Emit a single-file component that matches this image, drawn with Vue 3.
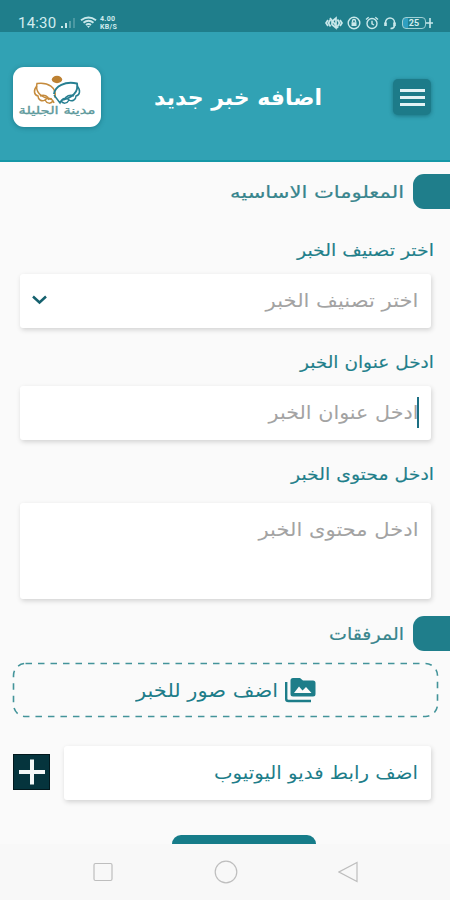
<template>
  <div class="screen" dir="rtl">
    <div class="status-bar" dir="ltr">
      <div class="status-left">
        <span class="clock">14:30</span>
        <svg class="signal" width="15" height="12" viewBox="0 0 15 12">
          <rect x="0" y="9" width="2" height="2" fill="#c9e8ea" />
          <rect x="4" y="6" width="2" height="5" fill="#c9e8ea" />
          <rect x="8" y="4" width="2" height="7" fill="#5aa3ab" />
          <rect x="12" y="1" width="2" height="10" fill="#4a98a2" />
        </svg>
        <svg class="wifi" width="17" height="13" viewBox="0 0 17 13" fill="none" stroke="#c9e8ea" stroke-width="2">
          <path d="M1 4.2Q8.500 -1.200 16 4.200"></path>
          <path d="M3.500 6.700Q8.500 2.800 13.500 6.700"></path>
          <path d="M6 9Q8.500 7 11 9"></path>
          <path d="M7 10H10L8.500 12Z" fill="#c9e8ea" stroke="none"></path>
        </svg>
        <span class="speed"><b>4.00</b><b>KB/S</b></span>
      </div>
      <div class="status-right">
        <svg width="18" height="14" viewBox="0 0 18 14" fill="none" stroke="#c9e8ea" stroke-width="1.700">
          <path d="M3 4L1 7L3 10M15 4L17 7L15 10M5.500 3.500L3.500 7L5.500 10.500M12.500 3.500L14.500 7L12.500 10.500"></path>
          <path d="M7 5.500L11 2V12L7 8.500ZM5 2L13 12"></path>
        </svg>
        <svg width="14" height="14" viewBox="0 0 14 14" fill="none" stroke="#c9e8ea" stroke-width="1.400">
          <circle cx="7" cy="7" r="5.800"></circle>
          <rect x="4.500" y="6.300" width="5" height="3.700" fill="#c9e8ea" stroke="none"></rect>
          <path d="M5.500 6.500V5a1.500 1.500 0 0 1 3 0v1.500"></path>
        </svg>
        <svg width="14" height="14" viewBox="0 0 14 14" fill="none" stroke="#c9e8ea" stroke-width="1.400">
          <circle cx="7" cy="7.500" r="5"></circle>
          <path d="M1 3.500L3.700 1.200M13 3.500L10.300 1.200M7 4.700V7.800L9 9"></path>
        </svg>
        <svg width="14" height="14" viewBox="0 0 14 14" fill="none" stroke="#c9e8ea" stroke-width="1.500">
          <path d="M2.500 8V6.500a4.500 4.500 0 0 1 9 0V8"></path>
          <path d="M2.500 6.500V10M11.500 6.500V10" stroke-width="2.600"></path>
          <path d="M11.500 10Q11 12.500 7.500 12.500"></path>
        </svg>
        <div class="battery-wrap">
          <span class="battery">25</span>
          <svg width="7" height="12" viewBox="0 0 7 12" fill="none" stroke="#c9e8ea" stroke-width="1.600">
            <path d="M4 1V11M0 6H7"></path>
          </svg>
        </div>
      </div>
    </div>

    <header class="app-header">
      <button class="menu-btn" aria-label="menu">
        <span></span>
        <span></span>
        <span></span>
      </button>
      <svg class="title" width="170" height="40" viewBox="0 0 170 40">
        <text x="85" y="27" textLength="168" lengthAdjust="spacingAndGlyphs">اضافه خبر جديد</text>
      </svg>
      <div class="logo">
        <svg width="88" height="60" viewBox="0 0 88 60" fill="none">
          <ellipse cx="44" cy="12.500" rx="5.200" ry="3.700" fill="#bd8132" />
          <g stroke="#c58b3d" stroke-width="1.500">
            <path d="M42 31C44 20 35 15 24 16.500C22 24 27 31 39 32"></path>
            <path d="M24 19C20 23 21 28 25 29C25 33 29 35 32 33C34 37 38 37 40 34"></path>
            <path d="M27 29C31 27 35 29 36 33M32 33C35 30 39 31 41 36"></path>
          </g>
          <g stroke="#277f91" stroke-width="1.500">
            <path d="M41 27C42 19 52 14 64 16.500C66 25 59 31 49 33" stroke-width="1.900"></path>
            <path d="M64 19C68 23 67 28 63 29C63 33 59 35 56 33C54 37 50 37 48 34"></path>
            <path d="M61 29C57 27 53 29 51 33M56 33C53 30 49 31 47 36L41 28"></path>
          </g>
          <text class="logo-text" x="44" y="46.500" textLength="77" lengthAdjust="spacingAndGlyphs">مدينة الجليلة</text>
        </svg>
      </div>
    </header>

    <main class="content">
      <div class="section-head">
        <span class="tab"></span>
        <svg class="section-title" width="176" height="34" viewBox="0 0 176 34">
          <text x="175" y="23" textLength="174" lengthAdjust="spacingAndGlyphs">المعلومات الاساسيه</text>
        </svg>
      </div>

      <div v-for="field in fields" :key="field.id" class="field">
        <svg class="label" width="200" height="30" viewBox="0 0 200 30">
          <text x="200" y="20" :textLength="field.labelWidth" lengthAdjust="spacingAndGlyphs">{{ field.text }}</text>
        </svg>
        <div class="box" :class="field.id">
          <svg class="placeholder" width="200" height="34" viewBox="0 0 200 34">
            <text x="199.500" y="23" :textLength="field.width" lengthAdjust="spacingAndGlyphs">{{ field.text }}</text>
          </svg>
          <span v-if="field.id === 'headline'" class="caret"></span>
          <svg v-if="field.id === 'category'" class="chevron" width="16" height="10" viewBox="0 0 16 10" fill="none" stroke="#15616e" stroke-width="2.500">
            <path d="M1 1.500L7.500 7.500L14 1.500"></path>
          </svg>
        </div>
      </div>

      <div class="section-head attachments">
        <span class="tab"></span>
        <svg class="section-title" width="176" height="34" viewBox="0 0 176 34">
          <text x="175" y="23" textLength="75" lengthAdjust="spacingAndGlyphs">المرفقات</text>
        </svg>
      </div>

      <button class="upload">
        <svg class="upload-frame" width="427" height="56" viewBox="0 0 427 56">
          <rect x="1.500" y="1.500" width="424" height="53" rx="12" fill="none" stroke="#43949a" stroke-width="1.600" stroke-dasharray="6.500 6"></rect>
        </svg>
        <svg class="photos-icon" width="31" height="26" viewBox="0 0 31 26">
          <path d="M1.200 5V22Q1.200 24 3.500 24H26" fill="none" stroke="#1d7d89" stroke-width="2.400"></path>
          <path d="M8 1H15L18 3.500H28Q30.500 3.500 30.500 6V17Q30.500 19.500 28 19.500H8Q5.500 19.500 5.500 17V3.500Q5.500 1 8 1Z" fill="#1d7d89"></path>
          <path d="M9 16L14 9.500L17.500 13.500L21 10L26.500 16Z" fill="#fafafa"></path>
        </svg>
        <svg class="upload-text" width="144" height="34" viewBox="0 0 144 34">
          <text x="143" y="24" textLength="142" lengthAdjust="spacingAndGlyphs">اضف صور للخبر</text>
        </svg>
      </button>

      <div class="video-row">
        <div class="box video">
          <svg class="video-text" width="208" height="34" viewBox="0 0 208 34">
            <text x="207" y="23" textLength="204" lengthAdjust="spacingAndGlyphs">اضف رابط فديو اليوتيوب</text>
          </svg>
        </div>
        <button class="add-btn" aria-label="add">
          <svg width="26" height="26" viewBox="0 0 26 26" stroke="#f4f8f8" stroke-width="4">
            <path d="M13 0.500V25.500M0 13H26"></path>
          </svg>
        </button>
      </div>

      <div class="submit-clip">
        <button class="submit"></button>
      </div>
    </main>

    <nav class="nav-bar" dir="ltr">
      <svg width="20" height="20" viewBox="0 0 20 20"><rect x="1" y="1.500" width="18" height="17" rx="1.500"></rect></svg>
      <svg width="24" height="24" viewBox="0 0 24 24"><circle cx="12" cy="12" r="10.800"></circle></svg>
      <svg width="20" height="22" viewBox="0 0 20 22"><path d="M19 1.500V20.500L1 11Z"></path></svg>
    </nav>
  </div>
</template>

<script setup>
import { ref } from 'vue';

const fields = ref([
  { id: 'category', text: 'اختر تصنيف الخبر', labelWidth: 137, width: 153 },
  { id: 'headline', text: 'ادخل عنوان الخبر', labelWidth: 134, width: 150 },
  { id: 'body', text: 'ادخل محتوى الخبر', labelWidth: 143, width: 160 }
]);
</script>

<style>
body { background: #fafafa; }
</style>

<style scoped>
.screen { width: 450px; height: 900px; overflow: hidden; display: flex; flex-direction: column; background: #fafafa; font-family: "DejaVu Sans", sans-serif; }
.screen * { box-sizing: border-box; }
svg { display: block; flex-shrink: 0; }
svg text { font-family: "DejaVu Sans", sans-serif; text-anchor: start; direction: rtl; }
button { border: none; padding: 0; background: none; }

.status-bar { height: 32px; flex-shrink: 0; padding: 12px 17px 0 18px; display: flex; justify-content: space-between; background: #1f7e8b; color: #d2edef; }
.status-left, .status-right { display: flex; align-items: center; height: 21px; }
.clock { width: 40px; font: 15px Roboto, sans-serif; letter-spacing: 0.2px; }
.signal { margin-left: 3px; }
.wifi { margin-left: 4px; }
.speed { display: flex; flex-direction: column; margin-left: 3px; font: 7px/8px Roboto, sans-serif; letter-spacing: 0.3px; }
.status-right { gap: 4px; }
.battery-wrap { display: flex; align-items: center; margin-left: 1px; }
.battery { width: 24px; height: 12px; border: 1px solid #9fd0d5; border-radius: 4px; background: linear-gradient(90deg, #2f9fc0 25%, transparent 25%); font: bold 9px/10px Roboto, sans-serif; text-align: center; }

.app-header { height: 130px; flex-shrink: 0; padding: 2px 19px 0 13px; display: flex; align-items: center; background: #31a2b4; border-bottom: 2px solid #1598a7; }
.menu-btn { width: 38px; height: 36px; border-radius: 5px; background: #1d7b89; box-shadow: 0 1px 4px rgba(0, 60, 70, 0.45); display: flex; flex-direction: column; align-items: center; justify-content: center; gap: 4px; }
.menu-btn span { width: 25px; height: 3px; background: #e3f3f5; }
.title { margin: 2px 70px 0 0; }
.title text { font-size: 22px; font-weight: bold; fill: #fff; text-anchor: middle; }
.logo { width: 88px; height: 60px; margin-right: auto; border-radius: 11px; background: #fff; box-shadow: 0 1px 5px rgba(0, 70, 85, 0.4); }
.logo .logo-text { font-size: 11px; fill: #5d999b; stroke: #5d999b; stroke-width: 0.3; text-anchor: middle; }

.content { height: 682px; flex-shrink: 0; display: flex; flex-direction: column; padding-top: 12px; }
.section-head { display: flex; align-items: center; gap: 8px; height: 35px; flex-shrink: 0; }
.tab { width: 37px; height: 35px; border-radius: 11px 0 0 11px; background: #1f7e8b; }
.section-title text { font-size: 17px; fill: #38858d; stroke: #38858d; stroke-width: 0.2; }
.field { padding: 0 16px 0 20px; height: 112px; flex-shrink: 0; }
.field:nth-child(2) { margin-top: 27px; }
.label { margin-bottom: 8px; }
.label text { font-size: 17px; fill: #1f7f8a; stroke: #1f7f8a; stroke-width: 0.15; }
.box { position: relative; height: 54px; margin-right: 3px; padding: 10px 12px 0 12px; display: flex; justify-content: space-between; background: #fff; border-radius: 3px; box-shadow: 1px 2px 5px rgba(0, 0, 0, 0.16); }
.box.body { height: 96px; margin-top: 13px; }
.placeholder text { font-size: 19px; fill: #a3a3a3; }
.chevron { margin-top: 11px; }
.caret { position: absolute; right: 12px; top: 11px; width: 2px; height: 31px; background: #1c6f83; }
.attachments { margin-top: 44px; }

.upload { position: relative; width: 427px; height: 56px; flex-shrink: 0; margin: 11px 11px 0 0; display: flex; align-items: center; justify-content: center; gap: 6px; direction: rtl; }
.upload-frame { position: absolute; inset: 0; }
.upload-text text { font-size: 19px; fill: #1d7d89; }
.video-row { display: flex; align-items: center; justify-content: space-between; margin-top: 28px; padding: 0 19px 0 13px; }
.video { width: 367px; margin: 0; }
.video-text text { font-size: 18px; fill: #1d7d89; }
.add-btn { width: 37px; height: 36px; margin-bottom: 2px; background: #05343d; border: 1px solid #02181d; display: flex; align-items: center; justify-content: center; }
.submit-clip { height: 9px; margin-top: 35px; overflow: hidden; padding-right: 134px; }
.submit { display: block; width: 144px; height: 50px; border-radius: 9px; background: #167c89; }

.nav-bar { flex: 1; display: flex; align-items: center; justify-content: space-between; padding: 0 92px 0 93px; background: #f8f8f8; }
.nav-bar svg { fill: none; stroke: #bebebe; stroke-width: 1.2; }
</style>
